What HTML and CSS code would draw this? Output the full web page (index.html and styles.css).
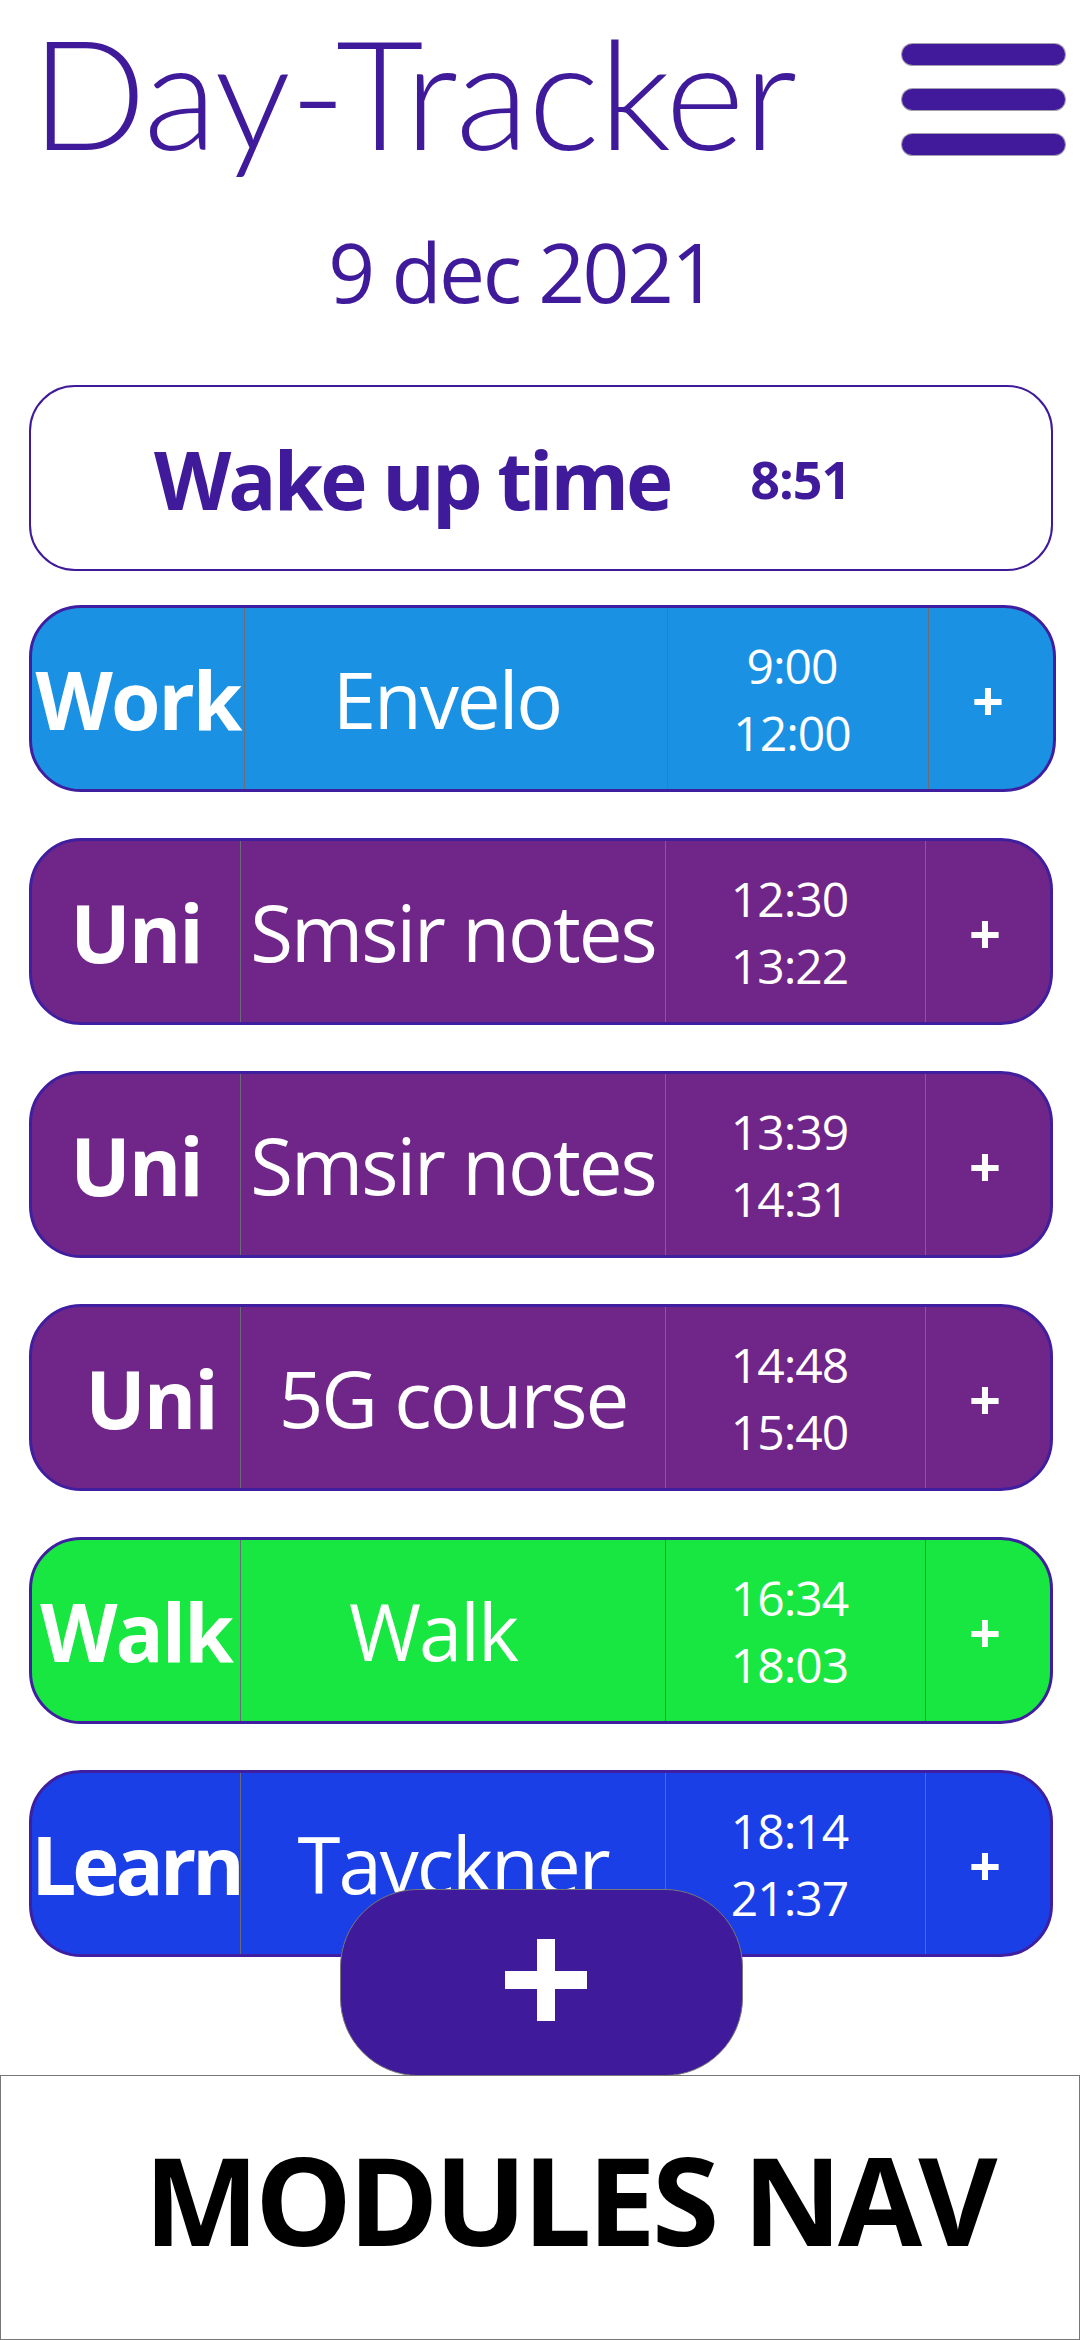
FILE: index.html
```html
<!DOCTYPE html>
<html lang="en">
<head>
<meta charset="utf-8">
<title>Day-Tracker</title>
<link rel="stylesheet" href="styles.css">
</head>
<body>
<div class="page">
  <main class="main">
    <header class="header">
      <h1 class="title">Day-Tracker</h1>
      <button class="menu" aria-label="Menu">
        <span class="bar"></span>
        <span class="bar"></span>
        <span class="bar"></span>
      </button>
    </header>
    <div class="date">9 dec 2021</div>
    <section class="wake">
      <span class="wake-label">Wake up time</span>
      <span class="wake-time">8:51</span>
    </section>
    <section class="list">
      <div class="row work">
        <div class="cell cat">Work</div>
        <div class="cell name name-left">Envelo</div>
        <div class="cell times"><span>9:00</span><span>12:00</span></div>
        <div class="cell add">+</div>
      </div>
      <div class="row uni">
        <div class="cell cat">Uni</div>
        <div class="cell name">Smsir notes</div>
        <div class="cell times"><span>12:30</span><span>13:22</span></div>
        <div class="cell add">+</div>
      </div>
      <div class="row uni">
        <div class="cell cat">Uni</div>
        <div class="cell name">Smsir notes</div>
        <div class="cell times"><span>13:39</span><span>14:31</span></div>
        <div class="cell add">+</div>
      </div>
      <div class="row uni">
        <div class="cell cat cat-shift">Uni</div>
        <div class="cell name">5G course</div>
        <div class="cell times"><span>14:48</span><span>15:40</span></div>
        <div class="cell add">+</div>
      </div>
      <div class="row walk">
        <div class="cell cat">Walk</div>
        <div class="cell name name-walk">Walk</div>
        <div class="cell times"><span>16:34</span><span>18:03</span></div>
        <div class="cell add">+</div>
      </div>
      <div class="row learn">
        <div class="cell cat cat-learn">Learn</div>
        <div class="cell name">Tavckner</div>
        <div class="cell times"><span>18:14</span><span>21:37</span></div>
        <div class="cell add">+</div>
      </div>
    </section>
  </main>
  <nav class="nav">
    <button class="fab" aria-label="Add">
      <svg viewBox="0 0 82 82" width="82" height="82">
        <rect x="32" y="0" width="18" height="82" fill="#fff"/>
        <rect x="0" y="32" width="82" height="18" fill="#fff"/>
      </svg>
    </button>
    <span class="nav-label">MODULES NAV</span>
  </nav>
</div>
</body>
</html>
```
FILE: styles.css
```css
* { box-sizing: border-box; }
html, body { margin: 0; padding: 0; background: #fff; }
body {
  font-family: "Open Sans", "Noto Sans", "Liberation Sans", sans-serif;
  color: #3f1a9a;
}
.page {
  height: 2340px;
  display: flex;
  flex-direction: column;
}
.main { flex: 1 1 auto; }

.header {
  display: flex;
  justify-content: space-between;
  align-items: flex-start;
  padding: 0 15px 0 31px;
}
.title {
  margin: 0;
  padding-top: 0;
  font-family: "Lato", "Open Sans", sans-serif;
  font-weight: 300;
  font-size: 152px;
  line-height: 1.2;
  letter-spacing: -1px;
  color: #3f1a9a;
}
.menu {
  margin-top: 44px;
  padding: 0;
  border: 0;
  background: transparent;
  display: flex;
  flex-direction: column;
  gap: 24px;
}
.bar {
  display: block;
  width: 163px;
  height: 21px;
  border-radius: 11px;
  background: #401a9b;
  box-shadow: 0 0 0 1px rgba(90, 80, 110, 0.55);
}

.date {
  text-align: center;
  font-size: 82px;
  line-height: 1;
  margin-top: 48px;
  padding-right: 36px;
  letter-spacing: -2.5px;
  color: #3f1a9a;
}

.wake {
  margin: 73px 27px 0 29px;
  height: 186px;
  border: 2px solid #3f1a9a;
  border-radius: 46px;
  display: flex;
  align-items: center;
  justify-content: flex-start;
  gap: 80px;
  padding-left: 123px;
}
.wake-label {
  font-weight: 700;
  font-size: 80px;
  letter-spacing: -3px;
}
.wake-time {
  font-weight: 700;
  font-size: 52px;
  letter-spacing: -1px;
}

.list {
  margin: 34px 27px 0 29px;
  display: flex;
  flex-direction: column;
  gap: 46px;
}
.row {
  height: 187px;
  border: 3px solid #3f1fa0;
  border-radius: 52px;
  display: grid;
  grid-template-columns: 208px 425px 260px 1fr;
  overflow: hidden;
  color: #fff;
}
.row.work {
  background: #1a91e3;
  margin-right: -3px;
  grid-template-columns: 212px 423px 261px 1fr;
}
.row.uni { background: #702688; }
.row.walk { background: #18e641; }
.row.learn { background: #1a3fe6; }

.cell {
  display: flex;
  align-items: center;
  justify-content: center;
  border-left: 1px solid #6b6b7a;
  margin-top: -3px;
  margin-bottom: -3px;
}
.cell:first-child { border-left: 0; }
.cat {
  font-weight: 700;
  font-size: 80px;
  letter-spacing: -2px;
  white-space: nowrap;
}
.cat-shift { padding-left: 30px; }
.cat-learn { letter-spacing: -4px; }
.name {
  font-size: 78px;
  letter-spacing: -2px;
  white-space: nowrap;
}
.name-left { padding-right: 18px; }
.name-walk { padding-right: 40px; }
.times {
  flex-direction: column;
  font-size: 48px;
  line-height: 67px;
  letter-spacing: -1px;
  padding-right: 12px;
}
.add {
  font-size: 56px;
  font-weight: 700;
  padding-right: 6px;
}

.nav {
  position: relative;
  flex: 0 0 265px;
  border: 1px solid #777;
  display: flex;
  align-items: center;
  padding: 0 0 18px 143px;
}
.nav-label {
  color: #000;
  font-weight: 700;
  font-size: 122px;
  letter-spacing: -4px;
}
.fab {
  position: absolute;
  left: 339px;
  bottom: 100%;
  width: 403px;
  height: 187px;
  border: 1px solid #777;
  border-radius: 78px;
  background: #3f1a9a;
  display: flex;
  align-items: center;
  justify-content: center;
  padding: 0 0 0 8px;
}
.fab svg { display: block; margin-top: -6px; }
```
